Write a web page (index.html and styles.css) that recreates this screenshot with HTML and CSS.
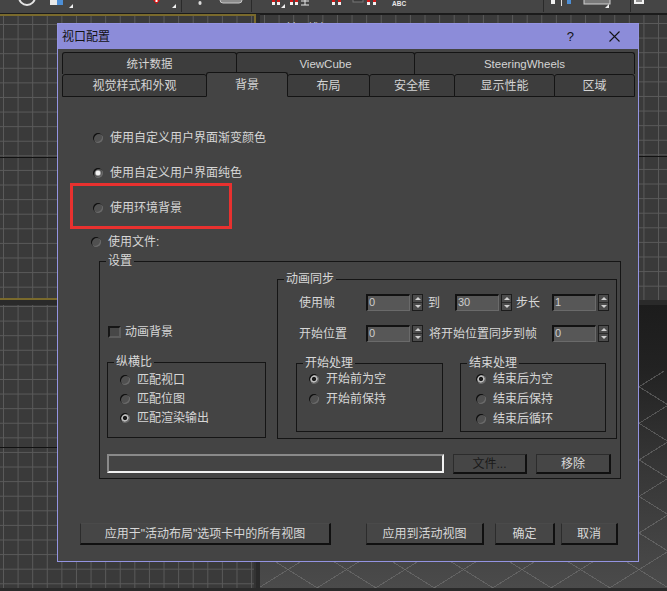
FILE: index.html
```html
<!DOCTYPE html>
<html lang="zh-CN">
<head>
<meta charset="utf-8">
<title>视口配置</title>
<link rel="stylesheet" href="styles.css">
</head>
<body>
<div class="desktop">
  <div class="toolbar">
    <svg width="667" height="13" viewBox="0 0 667 13">
      <circle cx="27" cy="-3" r="8" fill="none" stroke="#e4e4e4" stroke-width="2"/>
      <rect x="50" y="-3" width="13" height="8" fill="#e8e8e8"/>
      <rect x="57" y="-1" width="6" height="6" fill="#4d8fd6"/>
      <polygon points="69,8 73,4 73,8" fill="#f0f0f0"/>
      <path d="M153 0 L160 0 L156.5 4 Z" fill="#e01010"/>
      <rect x="155.5" y="0" width="2" height="2" fill="#fff"/>
      <polygon points="172,8 176,4 176,8" fill="#f0f0f0"/>
      <rect x="181" y="0" width="1" height="12" fill="#2a2a2a"/>
      <ellipse cx="200" cy="3" rx="1.6" ry="2" fill="#dcdcdc"/>
      <rect x="220" y="-5" width="22" height="8" rx="3" fill="#8c8c8c" stroke="#c8c8c8" stroke-width="1"/>
      <rect x="251" y="0" width="1" height="12" fill="#2a2a2a"/>
      <rect x="272" y="0" width="3" height="5" fill="#f2f2f2"/><rect x="272" y="0" width="3" height="2" fill="#d01818"/>
      <rect x="277" y="0" width="3" height="5" fill="#f2f2f2"/><rect x="277" y="0" width="3" height="2" fill="#d01818"/>
      <polygon points="281,8 285,4 285,8" fill="#f0f0f0"/>
      <rect x="290" y="0" width="3" height="5" fill="#f2f2f2"/><rect x="290" y="0" width="3" height="2" fill="#d01818"/>
      <rect x="295" y="0" width="3" height="5" fill="#f2f2f2"/><rect x="295" y="0" width="3" height="2" fill="#d01818"/>
      <path d="M301 1 H309 M305 0 V5 M301 5 H309" stroke="#e8e8e8" stroke-width="1" fill="none"/>
      <rect x="332" y="0" width="3" height="5" fill="#f2f2f2"/><rect x="332" y="0" width="3" height="2" fill="#d01818"/>
      <rect x="338" y="0" width="3" height="5" fill="#f2f2f2"/><rect x="338" y="0" width="3" height="2" fill="#d01818"/>
      <rect x="353" y="-2" width="10" height="4" fill="#3a3a3a" stroke="#777" stroke-width="1"/>
      <rect x="367" y="0" width="3" height="5" fill="#f2f2f2"/><rect x="367" y="0" width="3" height="2" fill="#d01818"/>
      <rect x="373" y="0" width="3" height="5" fill="#f2f2f2"/><rect x="373" y="0" width="3" height="2" fill="#d01818"/>
      <text x="392" y="6" font-family="Liberation Sans, sans-serif" font-size="6.5" font-weight="bold" fill="#e8e8e8">ABC</text>
      <rect x="543" y="0" width="1" height="12" fill="#2a2a2a"/>
      <rect x="551" y="0" width="4" height="4" fill="#f0f0f0"/>
      <rect x="561" y="0" width="1" height="6" fill="#e0e0e0"/>
      <rect x="567" y="0" width="4" height="4" fill="#4d8fd6"/>
      <rect x="584" y="-3" width="26" height="7" fill="#7a7a7a" stroke="#d0d0d0" stroke-width="1"/>
      <polygon points="605,8 609,4 609,8" fill="#f0f0f0"/>
      <rect x="630" y="0" width="1" height="12" fill="#2a2a2a"/>
      <rect x="634" y="-2" width="10" height="6" fill="#f0f0f0"/>
      <path d="M636 1 H642" stroke="#333" stroke-width="1"/>
    </svg>
  </div>

  <div class="viewports">
    <div class="vp vp-tl"></div>
    <div class="vp vp-tr"><span class="vp-label">[+] [前] [线框]</span></div>
    <div class="vp vp-bl"></div>
    <div class="vp vp-persp">
      <div class="sky"></div>
      <div class="floor"></div>
    </div>
  </div>

  <div class="dialog">
    <div class="titlebar">
      <span class="title">视口配置</span>
      <span class="help">?</span>
      <svg class="close" width="11" height="11" viewBox="0 0 11 11"><path d="M0.5 0.5 L10.5 10.5 M10.5 0.5 L0.5 10.5" stroke="#141414" stroke-width="1.1" fill="none"/></svg>
    </div>

    <div class="tabs">
      <div class="tab-row row1">
        <div class="tab">统计数据</div>
        <div class="tab">ViewCube</div>
        <div class="tab">SteeringWheels</div>
      </div>
      <div class="tab-row row2">
        <div class="tab">视觉样式和外观</div>
        <div class="tab active">背景</div>
        <div class="tab">布局</div>
        <div class="tab">安全框</div>
        <div class="tab">显示性能</div>
        <div class="tab">区域</div>
      </div>
    </div>

    <div class="page">
      <div class="radio-row main"><span class="radio"></span><span>使用自定义用户界面渐变颜色</span></div>
      <div class="radio-row main"><span class="radio on"></span><span>使用自定义用户界面纯色</span></div>
      <div class="radio-row main"><span class="radio"></span><span>使用环境背景</span></div>
      <div class="radio-row file"><span class="radio"></span><span>使用文件:</span></div>

      <div class="group settings">
        <div class="group-title">设置</div>
        <div class="settings-body">
          <div class="col-left">
            <div class="check-row"><span class="checkbox"></span><span>动画背景</span></div>
            <div class="group aspect">
              <div class="group-title">纵横比</div>
              <div class="radio-list">
                <div class="radio-item"><span class="radio"></span><span>匹配视口</span></div>
                <div class="radio-item"><span class="radio"></span><span>匹配位图</span></div>
                <div class="radio-item"><span class="radio dot"></span><span>匹配渲染输出</span></div>
              </div>
            </div>
          </div>

          <div class="group sync">
            <div class="group-title">动画同步</div>
            <div class="sync-row first">
              <span class="lbl-a">使用帧</span>
              <div class="spinner"><div class="edit">0</div><div class="arrows"></div></div>
              <span class="lbl-to">到</span>
              <div class="spinner"><div class="edit">30</div><div class="arrows"></div></div>
              <span class="lbl-step">步长</span>
              <div class="spinner"><div class="edit">1</div><div class="arrows"></div></div>
            </div>
            <div class="sync-row second">
              <span class="lbl-a">开始位置</span>
              <div class="spinner"><div class="edit">0</div><div class="arrows"></div></div>
              <span class="lbl-sync">将开始位置同步到帧</span>
              <div class="spinner"><div class="edit">0</div><div class="arrows"></div></div>
            </div>
            <div class="subgroups">
              <div class="group sub start">
                <div class="group-title">开始处理</div>
                <div class="radio-list">
                  <div class="radio-item"><span class="radio dot"></span><span>开始前为空</span></div>
                  <div class="radio-item"><span class="radio"></span><span>开始前保持</span></div>
                </div>
              </div>
              <div class="group sub end">
                <div class="group-title">结束处理</div>
                <div class="radio-list">
                  <div class="radio-item"><span class="radio dot"></span><span>结束后为空</span></div>
                  <div class="radio-item"><span class="radio"></span><span>结束后保持</span></div>
                  <div class="radio-item"><span class="radio"></span><span>结束后循环</span></div>
                </div>
              </div>
            </div>
          </div>

          <div class="file-row">
            <div class="file-field"></div>
            <div class="btn btn-file">文件...</div>
            <div class="btn btn-remove">移除</div>
          </div>
        </div>
      </div>
    </div>

    <div class="footer">
      <div class="btn b-all">应用于"活动布局"选项卡中的所有视图</div>
      <div class="btn b-active">应用到活动视图</div>
      <div class="btn b-ok">确定</div>
      <div class="btn b-cancel">取消</div>
    </div>

    <div class="highlight"></div>
  </div>
</div>
</body>
</html>
```

FILE: styles.css
```css
* { box-sizing: border-box; }
html, body { margin: 0; padding: 0; }
body {
  width: 667px;
  height: 591px;
  overflow: hidden;
  background: #2a2a2a;
  font-family: "Liberation Sans", "Noto Sans CJK SC", sans-serif;
  font-size: 12px;
  line-height: 16px;
  color: #d6d6d6;
}
.desktop { position: relative; width: 667px; height: 591px; overflow: hidden; }

/* ---------- toolbar ---------- */
.toolbar { height: 14px; background: #454545; border-bottom: 1px solid #1b1b1b; }
.toolbar svg { display: block; }

/* ---------- viewports ---------- */
.viewports {
  display: grid;
  grid-template-columns: 256px 1fr;
  grid-template-rows: 286px 283px;
  column-gap: 4px;
  row-gap: 5px;
}
.vp { position: relative; overflow: hidden; }
.vp-tl, .vp-tr, .vp-bl {
  background-color: #3a3a3a;
  background-image:
    linear-gradient(90deg, #5a5a5a 1px, transparent 1px),
    linear-gradient(#5a5a5a 1px, transparent 1px);
  background-size: 14.6px 14.6px;
}
.vp-tl {
  border: 2px solid #7a6a2c;
  border-left: none;
  background-image:
    linear-gradient(#111, #111),
    linear-gradient(90deg, #5a5a5a 1px, transparent 1px),
    linear-gradient(#5a5a5a 1px, transparent 1px);
  background-size: 100% 1px, 14.6px 14.6px, 14.6px 14.6px;
  background-position: 0 141px, 3px 8px, 3px 8px;
  background-repeat: no-repeat, repeat, repeat;
}
.vp-tr {
  border-top: 1px solid #1b1b1b;
  background-image:
    linear-gradient(#111, #111),
    linear-gradient(90deg, #5a5a5a 1px, transparent 1px),
    linear-gradient(#5a5a5a 1px, transparent 1px);
  background-size: 100% 1px, 14.6px 14.6px, 14.6px 14.6px;
  background-position: 0 141px, 4px 8px, 4px 8px;
  background-repeat: no-repeat, repeat, repeat;
}
.vp-label { display: block; margin: 6px 0 0 5px; color: #cfcfcf; font-size: 12px; }
.vp-bl {
  background-image:
    linear-gradient(#111, #111),
    linear-gradient(90deg, #5a5a5a 1px, transparent 1px),
    linear-gradient(#5a5a5a 1px, transparent 1px);
  background-size: 100% 1px, 14.6px 14.6px, 14.6px 14.6px;
  background-position: 0 142px, 3px 1px, 3px 1px;
  background-repeat: no-repeat, repeat, repeat;
  border-right: 2px solid #333;
}
.vp-persp {
  display: flex;
  flex-direction: column;
  background: linear-gradient(#1c1c1c 0%, #222 22%, #353535 55%, #4b4b4b 100%);
}
.vp-persp .sky { height: 66px; flex: none; }
.vp-persp .floor {
  flex: 1;
  background-image:
    repeating-linear-gradient(32deg, transparent 0 30px, rgba(120,120,120,0.55) 30px 31px),
    repeating-linear-gradient(-32deg, transparent 0 30px, rgba(120,120,120,0.55) 30px 31px);
}

/* ---------- dialog ---------- */
.dialog {
  position: absolute;
  left: 57px;
  top: 23px;
  width: 582px;
  height: 539px;
  background: #444;
  border: 1px solid #9494e2;
  display: flex;
  flex-direction: column;
}
.titlebar {
  height: 25px;
  flex: none;
  background: #8c8cd9;
  display: flex;
  align-items: center;
  padding-left: 4px;
  color: #121212;
}
.title { font-size: 12px; }
.help { margin-left: auto; font-size: 13px; margin-right: 35px; font-family: "Liberation Sans", sans-serif; }
.close { margin-right: 18px; display: block; }

/* tabs */
.tabs { margin: 3px 3px 0 4px; flex: none; }
.tab-row { display: grid; }
.row1 { grid-template-columns: 175px 178px 1fr; height: 22px; }
.row2 { grid-template-columns: 145px 81px 82px 85px 100px 1fr; height: 23px; }
.tab {
  border: 1px solid #141414;
  border-radius: 3px 3px 0 0;
  background: #3d3d3d;
  margin-left: -1px;
  display: flex;
  align-items: center;
  justify-content: center;
  color: #d4d4d4;
  font-size: 12px;
}
.tab:first-child { margin-left: 0; }
.row1 .tab { border-bottom: none; font-size: 11.5px; }
.tab.active {
  background: #444;
  margin-top: -2px;
  border-bottom-color: #444;
  position: relative;
  z-index: 1;
}

/* page */
.page { flex: 1; padding-top: 33px; }
.radio-row { display: flex; align-items: center; height: 16px; margin-bottom: 19px; gap: 7px; }
.radio-row.main { margin-left: 35px; }
.radio-row.file { margin-left: 33px; margin-bottom: 11px; margin-top: -1px; }

.radio {
  width: 10px;
  height: 10px;
  flex: none;
  border-radius: 50%;
  background: #505050;
  box-shadow: inset 1px 1px 0 #0e0e0e, inset -1px -1px 0 #6a6a6a;
}
.radio.on {
  background: radial-gradient(circle, #f2f2f2 0 2px, #9a9a9a 2.6px, #505050 3.6px);
}
.radio.dot {
  background: radial-gradient(circle, #1a1a1a 0 1.8px, #bcbcbc 2.4px 3.4px, #5a5a5a 4px);
}

.group { border: 1px solid #151515; }
.group-title {
  display: table;
  height: 16px;
  line-height: 16px;
  margin: -9px 0 0 5px;
  padding: 0 2px;
  background: #444;
  color: #d8d8d8;
}

.settings { margin-left: 41px; width: 522px; height: 218px; }
.settings .group-title { margin-left: 6px; }
.settings-body {
  display: grid;
  grid-template-columns: 159px 340px;
  column-gap: 11px;
  padding: 0 3px 0 7px;
  align-items: start;
}

.col-left { padding-top: 55px; }
.check-row { display: flex; align-items: center; height: 16px; margin-left: 1px; gap: 4px; }
.checkbox {
  width: 13px;
  height: 12px;
  flex: none;
  border: 2px solid #161616;
  border-right-color: #5c5c5c;
  border-bottom-color: #5c5c5c;
  background: #474747;
}
.aspect { margin-top: 22px; height: 76px; }
.aspect .radio-list { margin-top: 2px; }
.radio-list { display: flex; flex-direction: column; gap: 3px; }
.radio-item { display: flex; align-items: center; height: 16px; gap: 7px; padding-left: 12px; }

.sync { margin-top: 10px; height: 160px; }
.sync-row { display: flex; align-items: center; height: 17px; padding-left: 21px; }
.sync-row.first { margin-top: 7px; }
.sync-row.second { margin-top: 14px; }
.lbl-a { width: 67px; flex: none; }
.lbl-to { margin-left: 5px; width: 27px; flex: none; }
.lbl-step { margin-left: 4px; width: 36px; flex: none; }
.lbl-sync { margin-left: 6px; width: 123px; flex: none; }

.spinner { display: flex; width: 57px; height: 17px; flex: none; gap: 2px; }
.edit {
  width: 44px;
  height: 17px;
  background: #575757;
  border-top: 2px solid #121212;
  border-left: 2px solid #121212;
  border-right: 1px solid #6a6a6a;
  border-bottom: 1px solid #6a6a6a;
  color: #cdcdcd;
  font-family: "Liberation Sans", sans-serif;
  font-size: 11px;
  line-height: 12px;
  padding-left: 1px;
}
.arrows {
  width: 11px;
  height: 17px;
  border: 1px solid #1c1c1c;
  background: linear-gradient(#4c4c4c 0 7px, #2a2a2a 7px 8px, #4c4c4c 8px);
  display: flex;
  flex-direction: column;
  justify-content: space-around;
  align-items: center;
}
.arrows::before, .arrows::after {
  content: "";
  width: 0;
  height: 0;
  border-left: 3px solid transparent;
  border-right: 3px solid transparent;
}
.arrows::before { border-bottom: 3px solid #cfcfcf; }
.arrows::after { border-top: 3px solid #cfcfcf; }

.subgroups { display: flex; gap: 17px; padding-left: 18px; margin-top: 21px; }
.sub { height: 69px; }
.sub.start { width: 147px; }
.sub.end { width: 146px; }
.sub .radio-list { gap: 4px; }
.sub.end .radio-item { padding-left: 15px; }

.file-row { grid-column: 1 / -1; display: flex; margin-top: 15px; height: 20px; }
.file-field {
  width: 337px;
  height: 19px;
  border-top: 2px solid #8a8a8a;
  border-left: 2px solid #8a8a8a;
  border-right: 2px solid #f2f2f2;
  border-bottom: 2px solid #f2f2f2;
  background: #444;
}
.btn {
  display: flex;
  align-items: center;
  justify-content: center;
  background: #464646;
  border: 1px solid #2c2c2c;
  border-right: 2px solid #101010;
  border-bottom: 2px solid #101010;
  color: #d8d8d8;
}
.btn-file { margin-left: 9px; width: 74px; height: 20px; color: #1a1a1a; }
.btn-remove { margin-left: 9px; width: 75px; height: 20px; }

/* footer */
.footer { flex: none; display: flex; padding: 0 0 16px 22px; }
.footer .btn { height: 22px; border-top-color: #4a4a4a; }
.b-all { width: 251px; }
.b-active { width: 118px; margin-left: 35px; }
.b-ok { width: 60px; margin-left: 11px; }
.b-cancel { width: 57px; margin-left: 6px; }

/* annotation overlay */
.highlight {
  position: absolute;
  left: 12px;
  top: 159px;
  width: 162px;
  height: 46px;
  border: 3px solid #e8312f;
}
```
